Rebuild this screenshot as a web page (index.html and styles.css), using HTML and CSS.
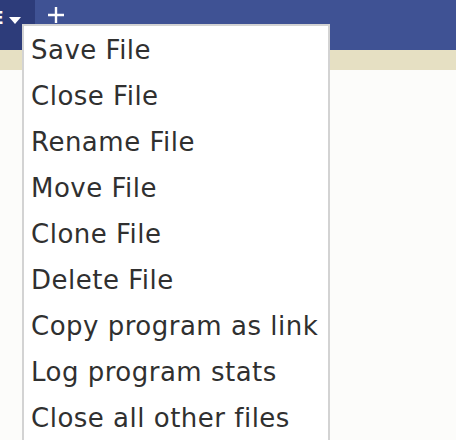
FILE: index.html
```html
<!DOCTYPE html>
<html>
<head>
<meta charset="utf-8">
<link rel="stylesheet" href="styles.css">
</head>
<body>
<div class="app">
  <header class="topbar">
    <div class="tab-active">
      <span class="tab-char">E</span>
      <svg class="caret" width="12" height="7" viewBox="0 0 12 7"><path d="M0 0 L12 0 L6 7 Z" fill="#fff"/></svg>
    </div>
    <div class="tab-add">
      <svg width="18" height="18" viewBox="0 0 18 18"><path d="M9 1 V17 M1 9 H17" stroke="#fff" stroke-width="2.4" fill="none"/></svg>
    </div>
  </header>
  <div class="strip"></div>
  <main class="content"></main>
  <ul class="menu">
    <li>Save File</li>
    <li>Close File</li>
    <li>Rename File</li>
    <li>Move File</li>
    <li>Clone File</li>
    <li>Delete File</li>
    <li>Copy program as link</li>
    <li>Log program stats</li>
    <li>Close all other files</li>
  </ul>
</div>
</body>
</html>
```

FILE: styles.css
```css
html, body {
  margin: 0;
  padding: 0;
  width: 456px;
  height: 440px;
  overflow: hidden;
  background: #fcfcfa;
  font-family: "DejaVu Sans", "Liberation Sans", sans-serif;
}
.app {
  position: relative;
  width: 456px;
  height: 440px;
}
.topbar {
  display: flex;
  height: 50px;
  background: #3f5294;
}
.tab-active {
  width: 35px;
  background: #2d3c7a;
  display: flex;
  align-items: flex-start;
  position: relative;
  overflow: hidden;
}
.tab-char {
  color: #fff;
  font-size: 17px;
  line-height: 1;
  margin-left: -8px;
  margin-top: 10px;
  font-weight: bold;
}
.caret {
  margin-left: 5px;
  margin-top: 17px;
}
.tab-add {
  padding: 6px 0 0 12px;
}
.strip {
  height: 20px;
  background: #e6e0c3;
}
.content {
  height: 370px;
}
.menu {
  position: absolute;
  left: 22px;
  top: 24px;
  width: 304px;
  margin: 0;
  padding: 1px 0 0;
  list-style: none;
  background: #fff;
  border: 2px solid #d3d3d3;
  border-bottom: none;
  height: 420px;
}
.menu li {
  font-size: 26px;
  letter-spacing: 0.5px;
  color: #303030;
  height: 46px;
  line-height: 46px;
  padding-left: 7px;
  white-space: nowrap;
}
```
